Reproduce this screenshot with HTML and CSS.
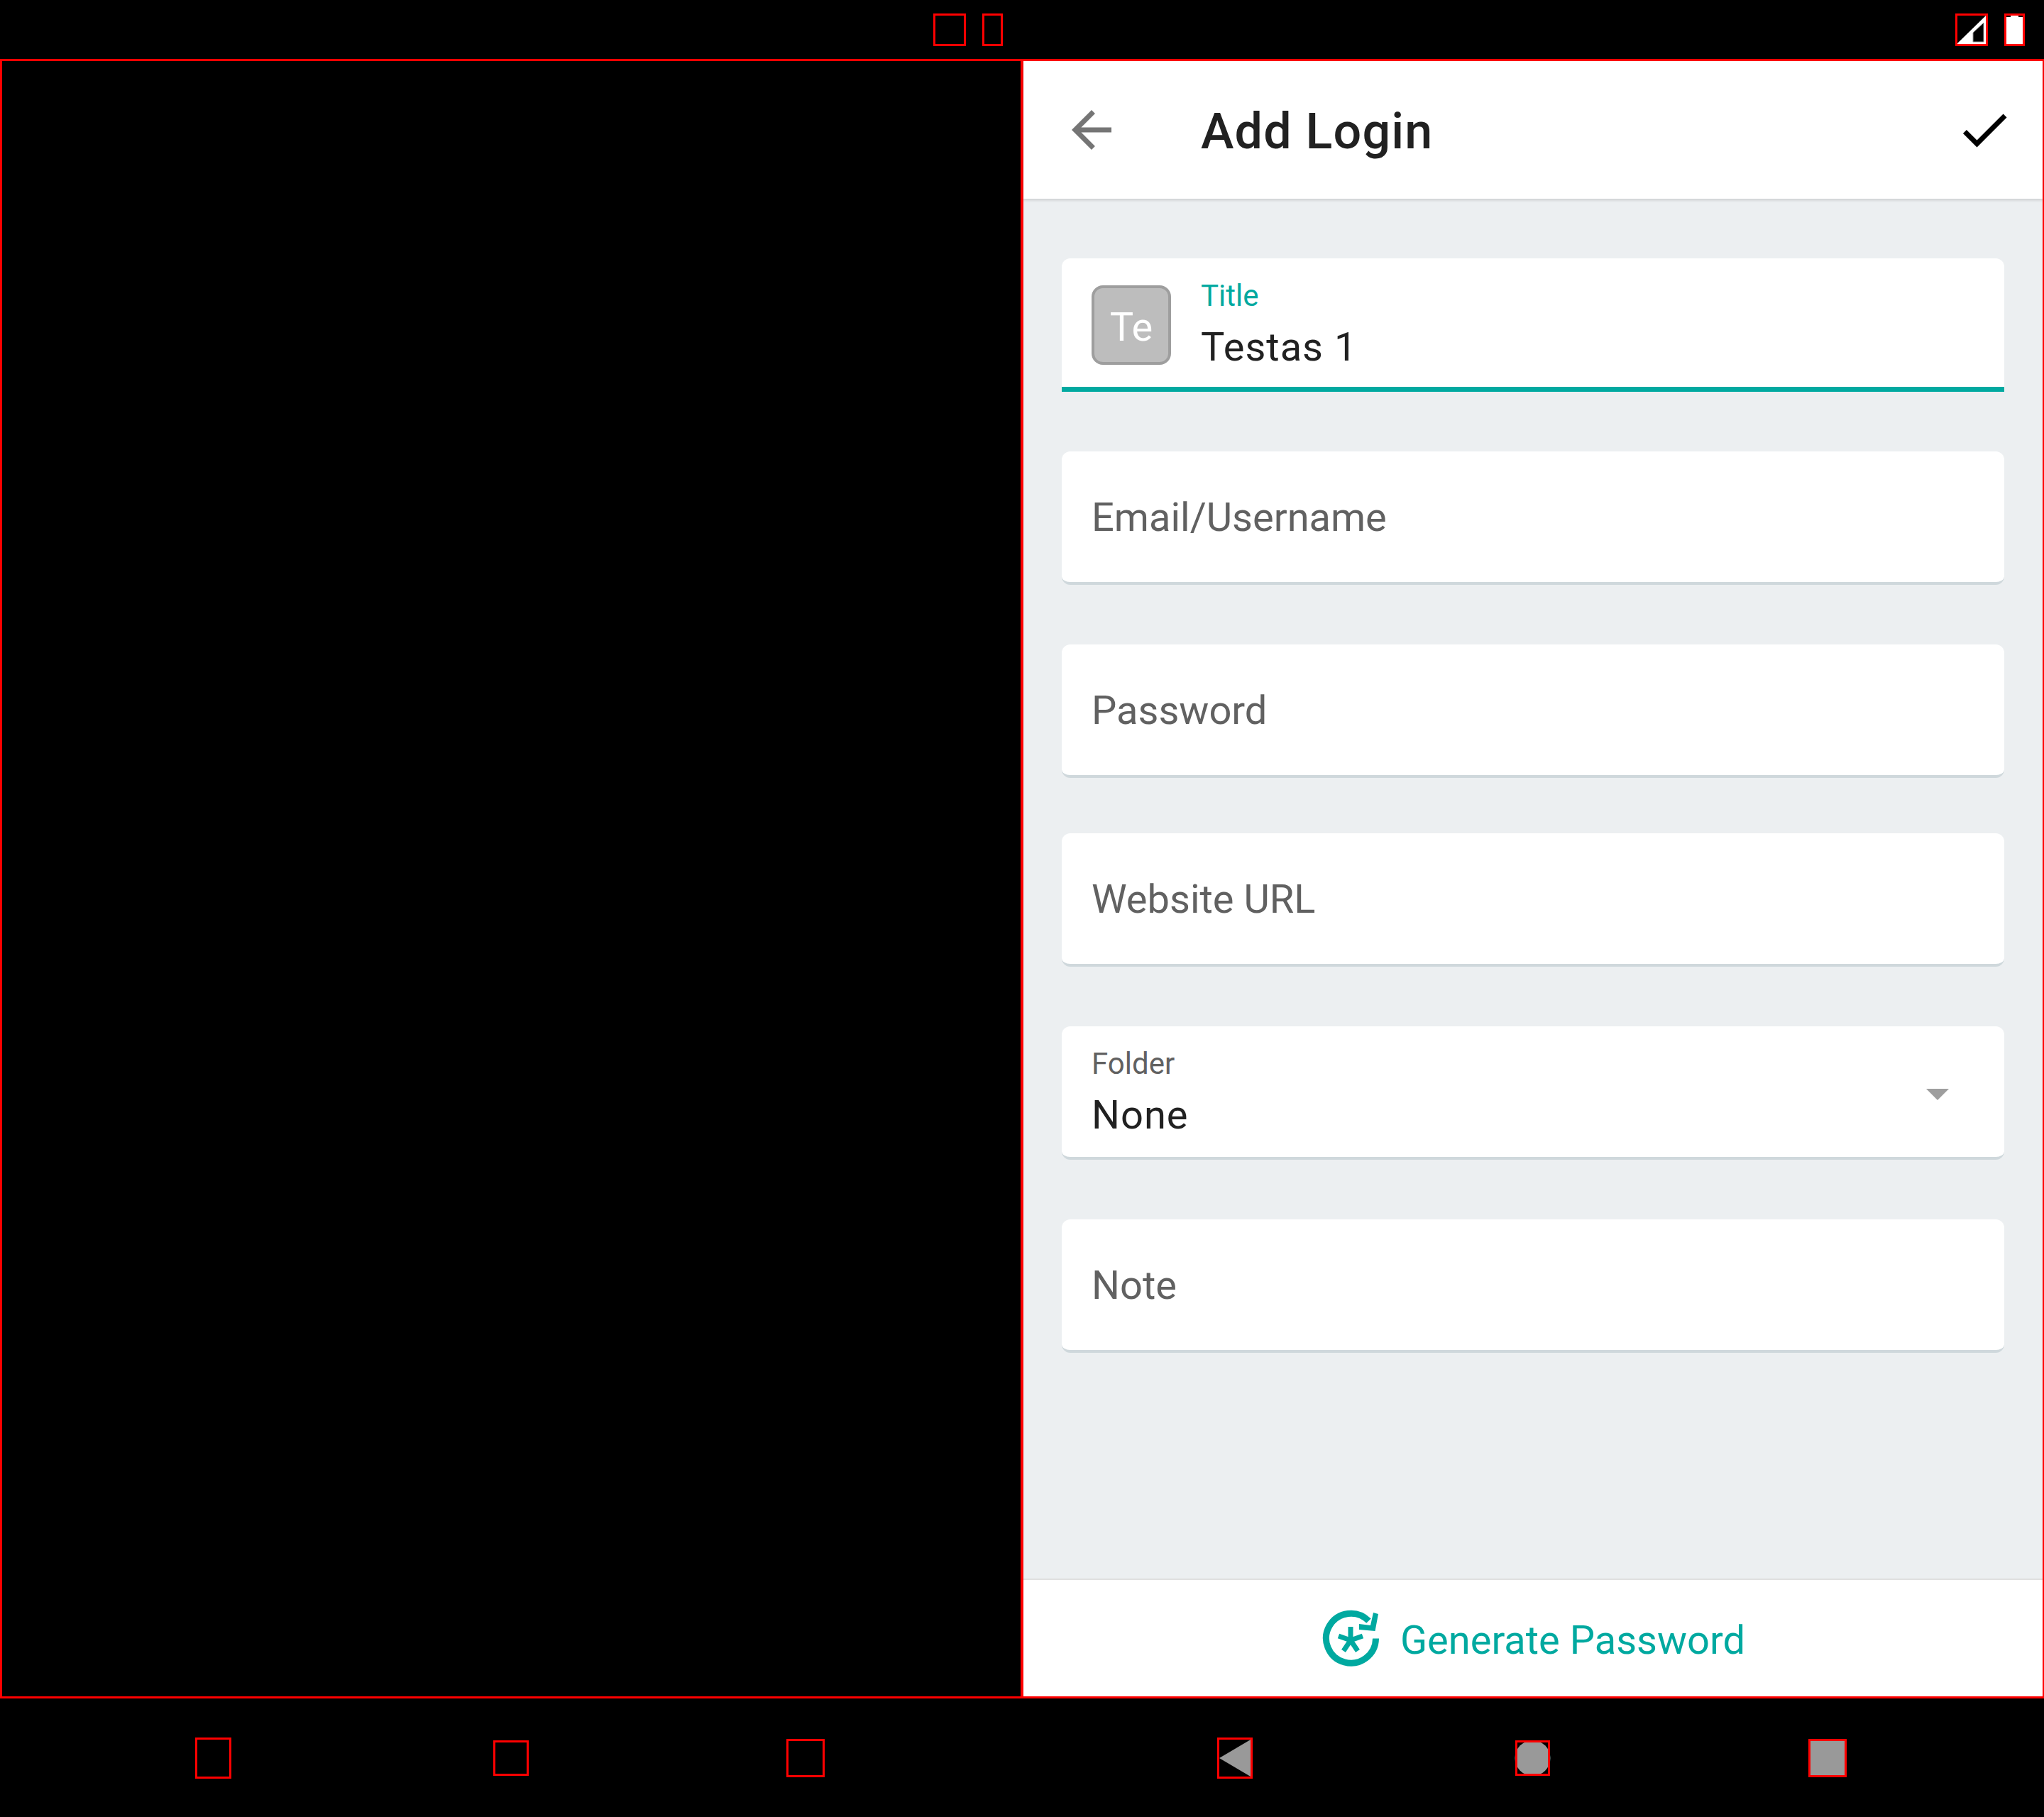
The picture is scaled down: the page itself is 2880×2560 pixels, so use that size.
FILE: index.html
```html
<!DOCTYPE html>
<html lang="en">
<head>
    <meta charset="UTF-8">
    <title>Add Login</title>
    <link rel="stylesheet" href="styles.css">
</head>
<body>
    <!-- Status bar -->
    <div class="status-bar">
        <div class="box box-square"></div>
        <div class="box box-narrow"></div>
        <svg class="status-signal" width="46" height="46" viewBox="0 0 46 46">
            <path d="M2 43 43 3V43Z" fill="#fff"/>
            <path d="M25 27 40 13V40H25Z" fill="#000" stroke="#999" stroke-width="1"/>
            <rect x="1.5" y="1.5" width="43" height="43" fill="none" stroke="#f00" stroke-width="3"/>
        </svg>
        <svg width="29" height="46" viewBox="0 0 29 46">
            <path d="M3 3H26V43H3Z" fill="#fff"/>
            <path d="M3 3H9V5H3Z M20 3H26V5H20Z" fill="#000"/>
            <rect x="1.5" y="1.5" width="26" height="43" fill="none" stroke="#f00" stroke-width="3"/>
        </svg>
    </div>

    <div class="main">
        <!-- Empty left pane -->
        <div class="pane-left"></div>

        <div class="pane-right">
            <div class="app-header">
                <svg class="header-back" width="84" height="84" viewBox="0 0 24 24">
                    <path d="M20 11H7.83l5.59-5.59L12 4l-8 8 8 8 1.41-1.41L7.83 13H20v-2z" fill="#757575"/>
                </svg>
                <div class="header-title">Add Login</div>
                <svg class="header-check" width="84" height="84" viewBox="0 0 24 24">
                    <path d="M9 16.17L4.83 12l-1.42 1.41L9 19 21 7l-1.41-1.41z" fill="#000"/>
                </svg>
            </div>

            <div class="form">
                <div class="card card-active">
                    <div class="avatar">Te</div>
                    <div class="field">
                        <div class="label label-active">Title</div>
                        <div class="value">Testas 1</div>
                    </div>
                </div>
                <div class="card card-gap">
                    <div class="placeholder">Email/Username</div>
                </div>
                <div class="card card-gap">
                    <div class="placeholder">Password</div>
                </div>
                <div class="card card-gap-small">
                    <div class="placeholder">Website URL</div>
                </div>
                <div class="card card-gap">
                    <div class="field">
                        <div class="label">Folder</div>
                        <div class="value">None</div>
                    </div>
                    <div class="dropdown-arrow"></div>
                </div>
                <div class="card card-gap">
                    <div class="placeholder">Note</div>
                </div>
            </div>

            <div class="app-footer">
                <svg width="79" height="79" viewBox="0 0 79 79">
                    <path d="M74.5 39.5A35 35 0 1 1 64.5 14.7" fill="none" stroke="#00a9a0" stroke-width="9"/>
                    <path d="M71 3 78 5 73.5 29 51 27V19L67 21Z" fill="#00a9a0"/>
                    <path d="M39 42V23M39 42 56 36M39 42 49 57M39 42 29 57M39 42 22 36" fill="none" stroke="#00a9a0" stroke-width="7"/>
                </svg>
                <div class="footer-label">Generate Password</div>
            </div>
        </div>
    </div>

    <!-- Navigation bar -->
    <div class="nav-bar">
        <div class="box nav-a"></div>
        <div class="box nav-b"></div>
        <div class="box nav-c"></div>
        <svg class="nav-back" width="50" height="58" viewBox="0 0 50 58">
            <path d="M3 29 47 3V55Z" fill="#999"/>
            <rect x="1.5" y="1.5" width="47" height="55" fill="none" stroke="#f00" stroke-width="3"/>
        </svg>
        <svg class="nav-home" width="49" height="50" viewBox="0 0 49 50">
            <circle cx="24.5" cy="25" r="25" fill="#999"/>
            <rect x="1.5" y="1.5" width="46" height="47" fill="none" stroke="#f00" stroke-width="3"/>
        </svg>
        <svg class="nav-recent" width="54" height="54" viewBox="0 0 54 54">
            <rect x="1.5" y="1.5" width="51" height="51" fill="#999" stroke="#f00" stroke-width="3"/>
        </svg>
    </div>
</body>
</html>
```

FILE: styles.css
```css
/* Basic reset */
body, html {
    margin: 0;
    padding: 0;
}

body {
    width: 2880px;
    height: 2560px;
    background-color: #000;
    font-family: Roboto, "Noto Sans", sans-serif;
    display: flex;
    flex-direction: column;
    overflow: hidden;
}

svg {
    display: block;
    flex: none;
    overflow: visible;
}

/* Red outlined boxes in the system bars */
.box {
    box-sizing: border-box;
    border: 3px solid #f00;
    flex: none;
}

/* Status bar */
.status-bar {
    box-sizing: border-box;
    height: 83px;
    padding: 19px 27px 0 1315px;
    display: flex;
    align-items: flex-start;
    gap: 23px;
}

.box-square {
    width: 46px;
    height: 46px;
}

.box-narrow {
    width: 29px;
    height: 46px;
}

.status-signal {
    margin-left: auto;
}

/* Two panes */
.main {
    height: 2310px;
    display: flex;
}

.pane-left {
    box-sizing: border-box;
    width: 1441px;
    border: 3px solid #f00;
}

.pane-right {
    flex: 1;
    display: flex;
    flex-direction: column;
    border-top: 3px solid #f00;
    border-bottom: 3px solid #f00;
    border-right: 2px solid #f00;
    border-left: 1px solid #f00;
    min-width: 0;
}

/* App header */
.app-header {
    height: 194px;
    background-color: #fff;
    display: flex;
    align-items: center;
    padding-left: 54px;
    padding-right: 40px;
    box-shadow: 0 2px 4px rgba(0, 0, 0, 0.15);
    position: relative;
}

.header-title {
    margin-left: 112px;
    padding-top: 3px;
    font-size: 70px;
    font-weight: 500;
    color: #212121;
    letter-spacing: 1.2px;
}

.header-check {
    margin-left: auto;
}

/* Form */
.form {
    flex: 1;
    background-color: #eceff1;
    padding: 84px 54px 0;
}

.card {
    box-sizing: border-box;
    height: 188px;
    background-color: #fff;
    border-radius: 12px;
    border-bottom: 4px solid #cfd8dc;
    padding: 0 42px;
    display: flex;
}

.card-gap {
    margin-top: 84px;
}

.card-gap-small {
    margin-top: 78px;
}

.card-active {
    border-radius: 12px 12px 0 0;
    border-bottom: 7px solid #00a9a0;
}

.avatar {
    box-sizing: border-box;
    width: 112px;
    height: 112px;
    margin: 38px 42px 0 0;
    background-color: #bdbdbd;
    border: 4px solid #9e9e9e;
    border-radius: 16px;
    color: #fff;
    font-size: 56px;
    line-height: 110px;
    text-align: center;
}

.field {
    padding-top: 28px;
}

.label {
    font-size: 42px;
    line-height: 50px;
    color: #616161;
}

.label-active {
    color: #00a9a0;
}

.value {
    margin-top: 14px;
    font-size: 56px;
    line-height: 66px;
    color: #212121;
    letter-spacing: 1px;
}

.placeholder {
    align-self: center;
    padding-top: 1px;
    font-size: 56px;
    color: #616161;
}

/* Dropdown triangle */
.dropdown-arrow {
    margin: 88px 36px 0 auto;
    width: 0;
    height: 0;
    border-left: 16px solid transparent;
    border-right: 16px solid transparent;
    border-top: 16px solid #9e9e9e;
}

/* Footer button */
.app-footer {
    box-sizing: border-box;
    height: 166px;
    background-color: #fff;
    border-top: 2px solid #e0e0e0;
    padding-left: 3px;
    display: flex;
    align-items: center;
    justify-content: center;
    gap: 30px;
}

.footer-label {
    padding-top: 5px;
    font-size: 56px;
    color: #00a9a0;
}

/* Navigation bar */
.nav-bar {
    flex: 1;
    display: flex;
    align-items: center;
    padding-top: 1px;
}

.nav-a {
    width: 51px;
    height: 58px;
    margin-left: 275px;
}

.nav-b {
    width: 50px;
    height: 50px;
    margin-left: 369px;
}

.nav-c {
    width: 54px;
    height: 54px;
    margin-left: 363px;
}

.nav-back {
    margin-left: 553px;
}

.nav-home {
    margin-left: 370px;
}

.nav-recent {
    margin-left: 364px;
}
```
